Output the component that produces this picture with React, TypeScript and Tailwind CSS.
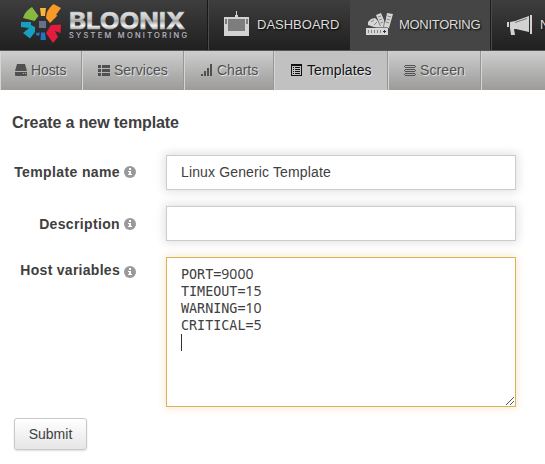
import React from "react";

const sans = "font-['Liberation_Sans',Arial,sans-serif]";

function Logo() {
  return (
    <svg width="42" height="42" viewBox="0 0 42 42" className="ml-5 mt-[3px] shrink-0">
      <path d="M12 4L18.5 13L14.5 18L3 15Q5 8 12 4Z" fill="#87b840" />
      <path d="M20 5H26L25 13H21Z" fill="#f9b53c" />
      <path d="M33.500 1L41 5L36 12L37.500 12.500L30 20L26 15Q26 7 33.500 1Z" fill="#f89a25" />
      <path d="M41 21.500L40.500 30L35 28L38 34L33 40L26 30L31 22Z" fill="#e31c3d" />
      <path d="M1 19L11 19V22L15 24L15 29L10 35.500L3 30L9 25L1 24Z" fill="#179fc0" />
      <path d="M21 29.500H25L26 37H20.500Z M16 30L20 29.500L19 33L16 32Z" fill="#2574bd" />
      <path d="M19 18H26V25H19Z" fill="#697087" />
    </svg>
  );
}

function Brand() {
  return (
    <svg width="121" height="42" viewBox="0 0 121 42" className="ml-[6px] mt-[3px] shrink-0 [text-shadow:none]">
      <defs>
        <linearGradient id="metal" gradientUnits="userSpaceOnUse" x1="0" y1="8" x2="0" y2="26">
          <stop offset="0" stopColor="#a0a0a0" />
          <stop offset="0.12" stopColor="#dedede" />
          <stop offset="0.45" stopColor="#c2c2c2" />
          <stop offset="0.55" stopColor="#a2a2a2" />
          <stop offset="0.82" stopColor="#f4f4f4" />
          <stop offset="1" stopColor="#b0b0b0" />
        </linearGradient>
      </defs>
      <text x="1" y="25.500" fill="url(#metal)" stroke="url(#metal)" strokeWidth="0.7" fontFamily="Inter, Liberation Sans, sans-serif" fontWeight="700" fontSize="23.500" textLength="116" lengthAdjust="spacingAndGlyphs">BLOONIX</text>
      <text x="1" y="35" fill="#b6b6bf" stroke="#b6b6bf" strokeWidth="0.2" fontFamily="Inter, Liberation Sans, sans-serif" fontSize="7.500" textLength="118">SYSTEM MONITORING</text>
    </svg>
  );
}

function DashIcon() {
  return (
    <svg width="25" height="25" viewBox="0 0 25 25" className="-mt-[3px] shrink-0">
      <path d="M12 0H13V4H14V6H25V25H0V6H11V4H12Z" fill="#d2d2d2" />
      <path d="M4 8H21V20H4ZM1 8H3V13H1ZM22 8H24V13H22Z" fill="#7d7d7d" />
    </svg>
  );
}

function SwatchIcon() {
  return (
    <svg width="28" height="22" viewBox="0 0 28 22" className="-mt-[2px] shrink-0">
      <g fill="#d6d6d6">
        <path d="M21 0L27 1L23 15H18Z" />
        <path d="M10 2L15 0L20 12L18.500 15H15Z" />
        <path d="M5 6L9 5L17 12V15H11L2 12V9Z" />
        <path d="M0 15H22V22H0Z" />
      </g>
      <path d="M2.500 17V20M5.500 17V20M8.500 17V20M11.500 17V20M14.500 17V20M21.500 3L25 4M20.500 6L24 7M20 9L23 10M12 4L15 3M13 7L16 6M14.500 10L17 9M5 9L8 7M8 12L11 9" stroke="#858585" />
      <path d="M0 14.500H22M20 1L17.500 14M10 4L14.500 13" stroke="#444" strokeWidth="0.6" />
      <path d="M17 18.500H20M18.500 17V20" stroke="#333" />
    </svg>
  );
}

function HornIcon() {
  return (
    <svg width="26" height="22" viewBox="0 0 26 22" className="shrink-0">
      <path d="M3 8L8 7L22 2V18L9 15H7L8 21H4L3 14Z M0 8H2V13H0Z M23 1H25V20H23Z" fill="#d2d2d2" />
      <path d="M8 8.500L20 4.500" stroke="#777" />
    </svg>
  );
}

function TabIcon({ kind }: { kind: string }) {
  return (
    <svg width="12" height="12" viewBox="0 0 12 12" className="shrink-0" fill="currentColor">
      {kind === "Hosts" && <path fillRule="evenodd" d="M2 0H10L12 7H0ZM0 8H12V11Q12 12 11 12H1Q0 12 0 11ZM8 9V10H9V9ZM10 9V10H11V9Z" />}
      {kind === "Services" && <path d="M0 1H3V4H0ZM4 1H12V4H4ZM0 5H3V8H0ZM4 5H12V8H4ZM0 9H3V12H0ZM4 9H12V12H4Z" />}
      {kind === "Charts" && <path d="M0 10H2V12H0ZM3 7H5V12H3ZM6 4H8V12H6ZM9 0H11V12H9Z" />}
      {kind === "Templates" && <path fillRule="evenodd" d="M0 0H11V12H0ZM1 2V11H10V2ZM2 3H3V4H2ZM4 3H9V4H4ZM2 5H3V6H2ZM4 5H9V6H4ZM2 7H3V8H2ZM4 7H9V8H4ZM2 9H3V10H2ZM4 9H9V10H4Z" />}
      {kind === "Screen" && <path d="M1 1.500H11M1 3.500H11M1 5.500H11M1 7.500H11M1 9.500H11M1 11.500H11M.5 2V3M11.500 2V3M.5 6V7M11.500 6V7M.5 10V11M11.500 10V11" stroke="currentColor" fill="none" />}
    </svg>
  );
}

function Tab({ kind, className, active = false }: { kind: string; className: string; active?: boolean }) {
  return (
    <div className={`flex h-full shrink-0 items-center border-r border-r-[#969696] border-l border-l-[#d5d5d5] text-[14px] [text-shadow:1px_1px_1px_#eee] ${active ? "bg-[#c1c1c1] text-[#111]" : "text-[#505050]"} ${className}`}>
      <span className="-mt-px"><TabIcon kind={kind} /></span>
      <span className="ml-1">{kind}</span>
    </div>
  );
}

function Info({ className = "-mt-px" }: { className?: string }) {
  return (
    <svg width="12" height="12" viewBox="0 0 12 12" className={`ml-1 shrink-0 ${className}`}>
      <circle cx="6" cy="6" r="6" fill="#999" />
      <path d="M5 2H7V4H5ZM4 5H7V8H8V9H4V8H5V6H4Z" fill="#fff" />
    </svg>
  );
}

function Label({ text, className, iconClass }: { text: string; className: string; iconClass?: string }) {
  return (
    <div className={`flex h-[35px] w-[136px] shrink-0 items-center justify-end text-[14px] font-bold ${className}`}>
      <span>{text}</span>
      <Info className={iconClass} />
    </div>
  );
}

function VariableLine({ name, value }: { name: string; value: string }) {
  return (
    <span className="flex h-[17px] items-baseline">
      {name}=<span className="font-['Noto_Sans',sans-serif] text-[14px] leading-none tracking-[0.05px]">{value}</span>
    </span>
  );
}

export default function App() {
  return (
    <main className={`h-[464px] w-[545px] overflow-hidden bg-white text-[#404040] ${sans}`}>
      <header className="flex h-[50px] bg-linear-to-b from-[#3e3e3e] to-[#202020] text-[13px] text-[#ddd] [text-shadow:1px_1px_2px_#000]">
        <div className="flex w-[208px] shrink-0 border-r border-[#171717]"><Logo /><Brand /></div>
        <div className="flex w-[142px] shrink-0 items-center border-l border-[#4b4b4b] pl-[15px]"><DashIcon /><span className="ml-2">DASHBOARD</span></div>
        <div className="flex w-[141px] shrink-0 items-center border-r border-[#1c1c1c] bg-[#454545] pl-4"><SwatchIcon /><span className="ml-[5px] tracking-[-0.3px]">MONITORING</span></div>
        <div className="flex shrink-0 items-center border-l border-[#494949] pl-[15px]"><HornIcon /><span className="ml-[7px]">NOTIFICATIONS</span></div>
      </header>
      <nav className="flex h-10 border-t border-[#555] bg-linear-to-b from-[#cecece] to-[#9c9b9a]">
        <Tab kind="Hosts" className="w-[82px] pl-[14px] tracking-[-0.1px]" />
        <Tab kind="Services" className="w-[102px] pl-[15px]" />
        <Tab kind="Charts" className="w-[90px] pl-4" />
        <Tab kind="Templates" active className="w-[114px] pl-4 tracking-[0.1px]" />
        <Tab kind="Screen" className="w-[93px] pl-[15px] tracking-[0.1px]" />
        <div className="border-l border-[#d5d5d5]" />
      </nav>
      <h1 className="mt-[23px] h-5 pl-3 text-[16px] font-bold leading-5 tracking-[-0.1px]">Create a new template</h1>
      <form>
        <div className="mt-[22px] flex">
          <Label text="Template name" className="tracking-[0.38px]" />
          <div className="ml-[30px] flex h-[35px] w-[350px] items-center border border-[#ccc] bg-white pl-[14px] text-[14px] tracking-[0.14px] shadow-[0_0_9px_2px_#e2e2e2]">Linux Generic Template</div>
        </div>
        <div className="mt-4 flex">
          <Label text="Description" className="pt-px tracking-[0.35px]" />
          <div className="ml-[30px] h-[35px] w-[350px] border border-[#ccc] bg-white shadow-[0_0_9px_2px_#e2e2e2]" />
        </div>
        <div className="mt-4 flex">
          <Label text="Host variables" className="-mt-[4px] tracking-[0.28px]" iconClass="mt-[3px]" />
          <div className="ml-[30px] flex h-[150px] w-[350px] flex-col border border-[#deaf59] bg-white pl-[14px] pt-2 font-['DejaVu_Sans_Mono',monospace] text-[13.4px] leading-[17px] shadow-[0_0_8px_1px_#f4e7d0]">
            <VariableLine name="PORT" value="9000" />
            <VariableLine name="TIMEOUT" value="15" />
            <VariableLine name="WARNING" value="10" />
            <VariableLine name="CRITICAL" value="5" />
            <span className="h-[17px] w-px shrink-0 bg-[#333]" />
            <svg width="8" height="8" className="mb-px mr-px mt-auto self-end"><path d="M0 8L8 0M4 8L8 4" stroke="#555" /></svg>
          </div>
        </div>
        <button type="button" className="ml-[14px] mt-[11px] flex h-8 w-[73px] items-center justify-center rounded-[3px] border border-[#c8c8c8] bg-linear-to-b from-white to-[#e6e6e6] text-[14px] shadow-[0_1px_2px_#ddd]">Submit</button>
      </form>
    </main>
  );
}
